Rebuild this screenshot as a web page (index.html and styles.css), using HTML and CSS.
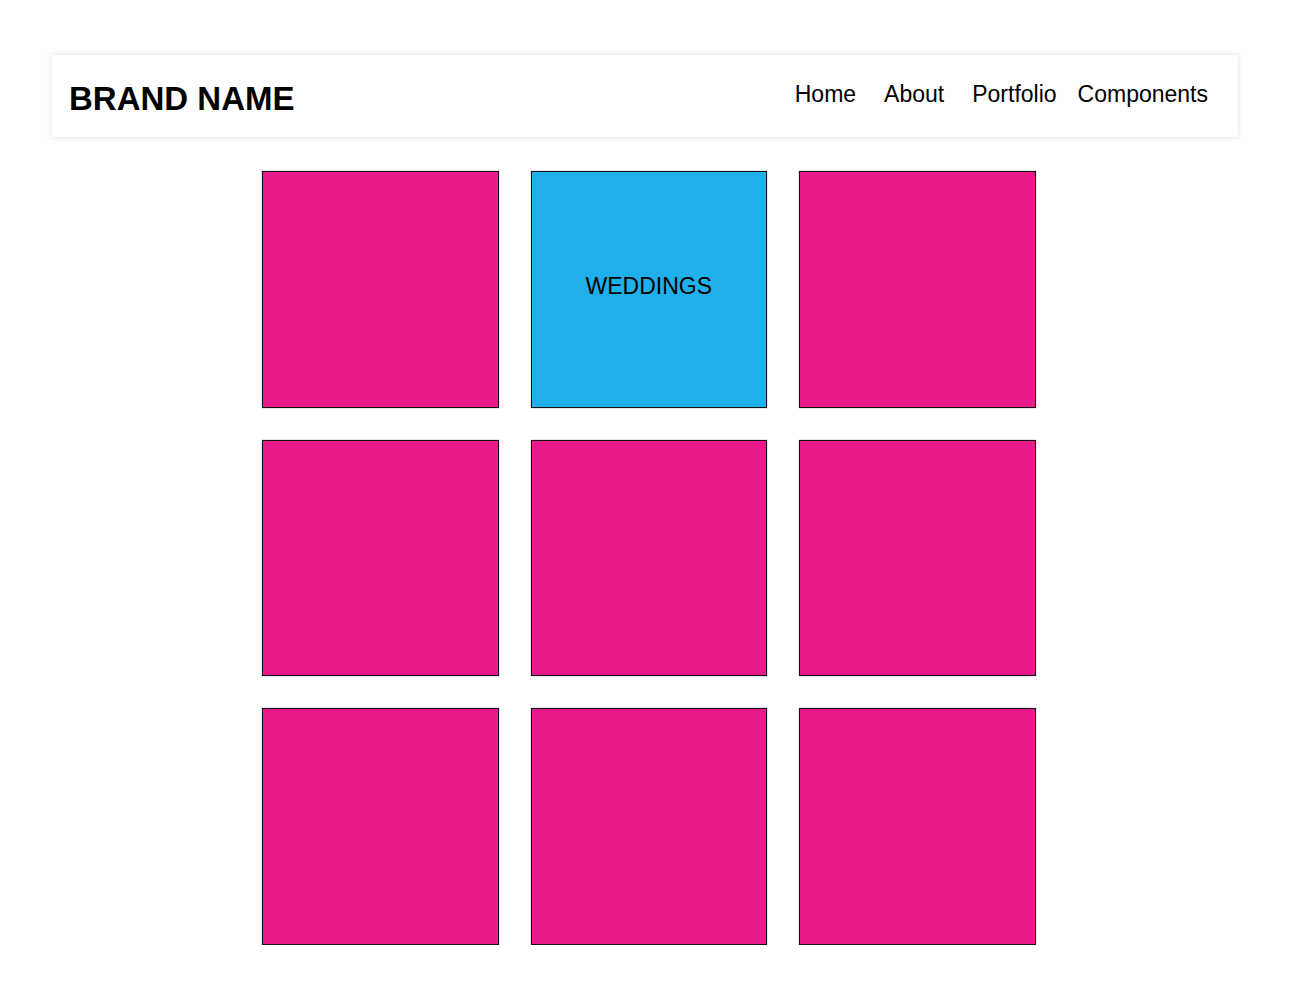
FILE: index.html
```html
<!DOCTYPE html>
<html lang="en">
<head>
<meta charset="utf-8">
<title>Brand Name</title>
<link rel="stylesheet" href="styles.css">
</head>
<body>
  <header class="site-header">
    <div class="brand">BRAND NAME</div>
    <nav class="nav">
      <a class="nav-link wide" href="#">Home</a>
      <a class="nav-link wide" href="#">About</a>
      <a class="nav-link" href="#">Portfolio</a>
      <a class="nav-link" href="#">Components</a>
    </nav>
  </header>
  <main class="grid">
    <div class="tile"></div>
    <div class="tile tile-blue"><span class="tile-label">WEDDINGS</span></div>
    <div class="tile"></div>
    <div class="tile"></div>
    <div class="tile"></div>
    <div class="tile"></div>
    <div class="tile"></div>
    <div class="tile"></div>
    <div class="tile"></div>
  </main>
</body>
</html>
```

FILE: styles.css
```css
* { box-sizing: border-box; }

body {
  margin: 0;
  background: #ffffff;
  font-family: "Liberation Sans", Arial, sans-serif;
  color: #000;
}

.site-header {
  margin: 55px 0 0 52px;
  width: 1186px;
  height: 82px;
  padding: 25px 30px 0 17px;
  background: #fff;
  box-shadow: 0 0 5px 1px rgba(0, 0, 0, 0.09);
  display: flex;
  justify-content: space-between;
  align-items: flex-start;
}

.brand {
  font-size: 33px;
  line-height: 38px;
  font-weight: 700;
}

.nav {
  display: flex;
  gap: 21px;
  margin-top: 1px;
}

.nav-link {
  font-size: 23px;
  line-height: 26px;
  color: #000;
  text-decoration: none;
}

.nav-link.wide { margin-right: 7px; }

.grid {
  margin: 34px auto 0;
  width: 774px;
  display: grid;
  grid-template-columns: repeat(3, 236.5px);
  grid-auto-rows: 236.5px;
  column-gap: 32px;
  row-gap: 32px;
}

.tile {
  background: #e91a8b;
  border: 1px solid #111;
  box-shadow: 0 0 1px rgba(0, 0, 0, 0.55);
  display: flex;
  align-items: center;
  justify-content: center;
}

.tile-blue { background: #1fafea; }

.tile-label {
  font-size: 23px;
  line-height: 26px;
  padding-bottom: 6px;
}
```
